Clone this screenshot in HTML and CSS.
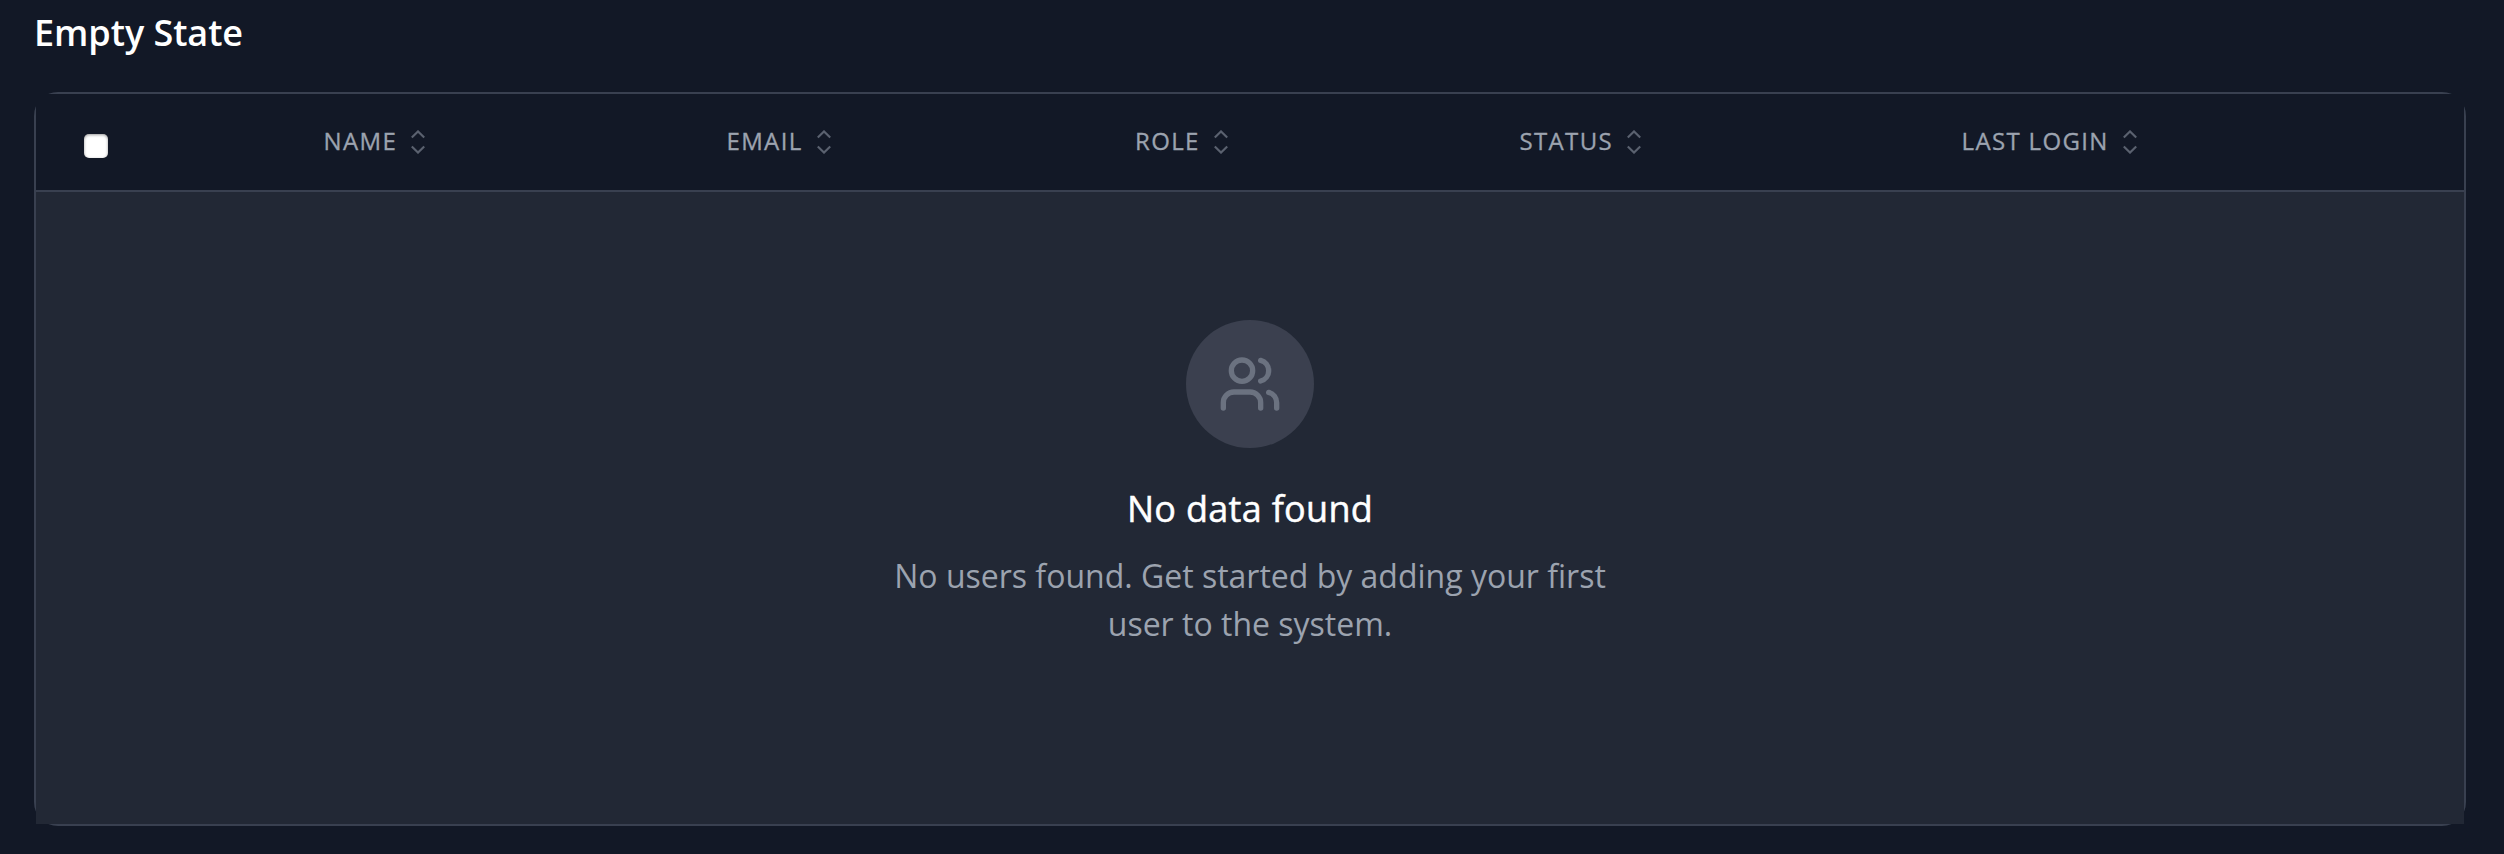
FILE: index.html
```html
<!DOCTYPE html>
<html lang="en">
<head>
<meta charset="utf-8">
<title>Empty State</title>
<link rel="stylesheet" href="styles.css">
</head>
<body>
<svg class="defs" width="0" height="0" aria-hidden="true">
<symbol id="sort" viewBox="0 0 14 24"><path d="M0.8 7.6 7 1.4l6.2 6.2M0.8 16.4 7 22.6l6.2-6.2"/></symbol>
</svg>
<main class="page">
<h2 class="title">Empty State</h2>
<section class="card">
<div class="head">
<div class="check"><span class="box" role="checkbox" aria-checked="false"></span></div>
<div class="col">NAME<svg class="sort"><use href="#sort"/></svg></div>
<div class="col">EMAIL<svg class="sort"><use href="#sort"/></svg></div>
<div class="col">ROLE<svg class="sort"><use href="#sort"/></svg></div>
<div class="col">STATUS<svg class="sort"><use href="#sort"/></svg></div>
<div class="col">LAST LOGIN<svg class="sort"><use href="#sort"/></svg></div>
</div>
<div class="empty">
<div class="badge"><svg class="users" viewBox="0 0 24 24"><path d="M16 21v-2a4 4 0 0 0-4-4H6a4 4 0 0 0-4 4v2"/><circle cx="9" cy="7" r="4"/><path d="M22 21v-2a4 4 0 0 0-3-3.87M16 3.13a4 4 0 0 1 0 7.75"/></svg></div>
<h3 class="heading">No data found</h3>
<p class="text">No users found. Get started by adding your first user to the system.</p>
</div>
</section>
</main>
</body>
</html>
```
FILE: styles.css
```css
* { box-sizing: border-box; }
body { margin: 0; background: #121826; font-family: "Open Sans", sans-serif; color: #fff; }
.defs { display: block; }
.page { height: 854px; padding: 5px 38px 28px 34px; display: flex; flex-direction: column; }
.title { margin: 0 0 31px; font-size: 36px; line-height: 56px; font-weight: 600; letter-spacing: -0.05px; }
.card { height: 734px; border: 2px solid #394050; border-radius: 24px; display: flex; flex-direction: column; }
.head { height: 98px; background: #121826; border-bottom: 2px solid #394050; display: grid; grid-template-columns: 287.5px 403px 408.5px 384.5px 442px 1fr; }
.check { padding: 40px 0 0 48px; }
.box { display: block; width: 24px; height: 24px; border-radius: 5px; background: #fff; box-shadow: inset 0 1px 3px rgba(0,0,0,.4); }
.col { display: flex; align-items: center; height: 92px; gap: 14px; font-size: 24px; letter-spacing: 1.35px; color: #9ca3af; -webkit-text-stroke: 0.3px #9ca3af; white-space: nowrap; }
.sort { width: 14px; height: 24px; margin-top: 4px; fill: none; stroke: #5a616f; stroke-width: 2.1; }
.empty { flex: 1; background: #222835; display: flex; flex-direction: column; align-items: center; padding-top: 128px; }
.badge { width: 128px; height: 128px; border-radius: 50%; background: #3b404f; display: flex; align-items: center; justify-content: center; }
.users { width: 64px; height: 64px; fill: none; stroke: #6b7280; stroke-width: 2; stroke-linecap: round; stroke-linejoin: round; }
.heading { margin: 33px 0 15px; font-size: 36px; line-height: 56px; font-weight: 500; letter-spacing: 0.3px; -webkit-text-stroke: 0.5px #fff; }
.text { margin: 0; width: 768px; font-size: 32px; line-height: 48px; text-align: center; color: #9ca3af; }
```
